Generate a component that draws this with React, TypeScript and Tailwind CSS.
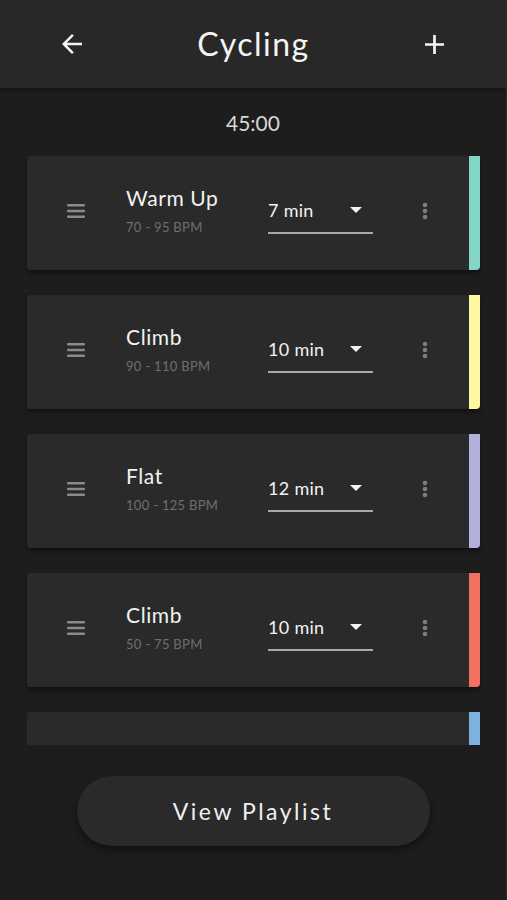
const segments = [
  { name: "Warm Up", bpm: "70 - 95 BPM", time: "7 min", color: "bg-[#84d6c6]" },
  { name: "Climb", bpm: "90 - 110 BPM", time: "10 min", color: "bg-[#fdf8a2]" },
  { name: "Flat", bpm: "100 - 125 BPM", time: "12 min", color: "bg-[#b4b0dc]" },
  { name: "Climb", bpm: "50 - 75 BPM", time: "10 min", color: "bg-[#f2705f]" },
];

function SegmentCard({ s }: { s: (typeof segments)[number] }) {
  return (
    <div className="flex h-[114px] shrink-0 rounded-[3px] bg-[#2a2a2a] shadow-[0_3px_4px_rgba(0,0,0,0.45)]">
      <div className="flex flex-1 items-center pl-[40px]">
        <svg width="18" height="14" viewBox="0 0 18 14" className="mb-[4px]">
          <rect y="0" width="18" height="2.4" rx="1" fill="#8a8a8a" />
          <rect y="5.8" width="18" height="2.4" rx="1" fill="#8a8a8a" />
          <rect y="11.6" width="18" height="2.4" rx="1" fill="#8a8a8a" />
        </svg>
        <div className="mb-[6px] ml-[41px] w-[142px]">
          <div className="text-[21px] leading-[24px] tracking-[0.6px] text-[#f2f2f2]">{s.name}</div>
          <div className="mt-[9px] text-[13px] leading-[16px] tracking-[0.3px] text-[#6f6f6f]">{s.bpm}</div>
        </div>
        <div className="mt-[7px] flex w-[105px] items-center justify-between border-b-2 border-[#a8a8a8] pb-[11px]">
          <span className="text-[18px] leading-[22px] tracking-[0.3px] text-[#f2f2f2]">{s.time}</span>
          <svg width="12" height="6" viewBox="0 0 12 6" className="mr-[11px]">
            <path d="M0 0h12L6 6z" fill="#f2f2f2" />
          </svg>
        </div>
        <svg width="6" height="18" viewBox="0 0 6 18" className="mb-[4px] ml-[49px]">
          <circle cx="3" cy="3" r="2.3" fill="#7d7d7d" />
          <circle cx="3" cy="9" r="2.3" fill="#7d7d7d" />
          <circle cx="3" cy="15" r="2.3" fill="#7d7d7d" />
        </svg>
      </div>
      <div className={`w-[11px] rounded-br-[4px] ${s.color}`} />
    </div>
  );
}

export default function App() {
  return (
    <div
      className="h-[900px] w-[507px] overflow-hidden border-r border-[#2c2c2c] bg-[#1d1d1d]"
      style={{ fontFamily: "Lato, 'Noto Sans', sans-serif" }}
    >
      <header className="relative z-10 flex h-[88px] items-center justify-between bg-[#282828] px-[62px] shadow-[0_2px_4px_rgba(0,0,0,0.35)]">
        <svg width="20" height="20" viewBox="4 4 16 16">
          <path d="M20 11H7.83l5.59-5.59L12 4l-8 8 8 8 1.41-1.41L7.83 13H20v-2z" fill="#f4f4f4" />
        </svg>
        <h1 className="text-[32px] leading-[36px] tracking-[1.5px] text-[#f4f4f4]">Cycling</h1>
        <svg width="19" height="19" viewBox="5 5 14 14">
          <path d="M19 13h-6v6h-2v-6H5v-2h6V5h2v6h6v2z" fill="#f4f4f4" />
        </svg>
      </header>

      <div className="pt-[23px] text-center text-[21px] leading-[24px] text-[#d8d8d8]">45:00</div>

      <div className="mt-[21px] flex h-[589px] flex-col gap-[25px] overflow-hidden pl-[27px] pr-[26px] pb-[6px]">
        {segments.map((s, i) => (
          <SegmentCard key={i} s={s} />
        ))}
        <div className="flex h-[114px] shrink-0 rounded-[3px] bg-[#2a2a2a]">
          <div className="flex-1" />
          <div className="w-[11px] bg-[#7eb2de]" />
        </div>
      </div>

      <button className="mx-auto mt-[31px] flex h-[70px] w-[353px] items-center justify-center rounded-full bg-[#2a2a2a] text-[23px] tracking-[2.5px] text-[#f0f0f0] shadow-[0_4px_8px_rgba(0,0,0,0.45)]">
        View Playlist
      </button>
    </div>
  );
}
